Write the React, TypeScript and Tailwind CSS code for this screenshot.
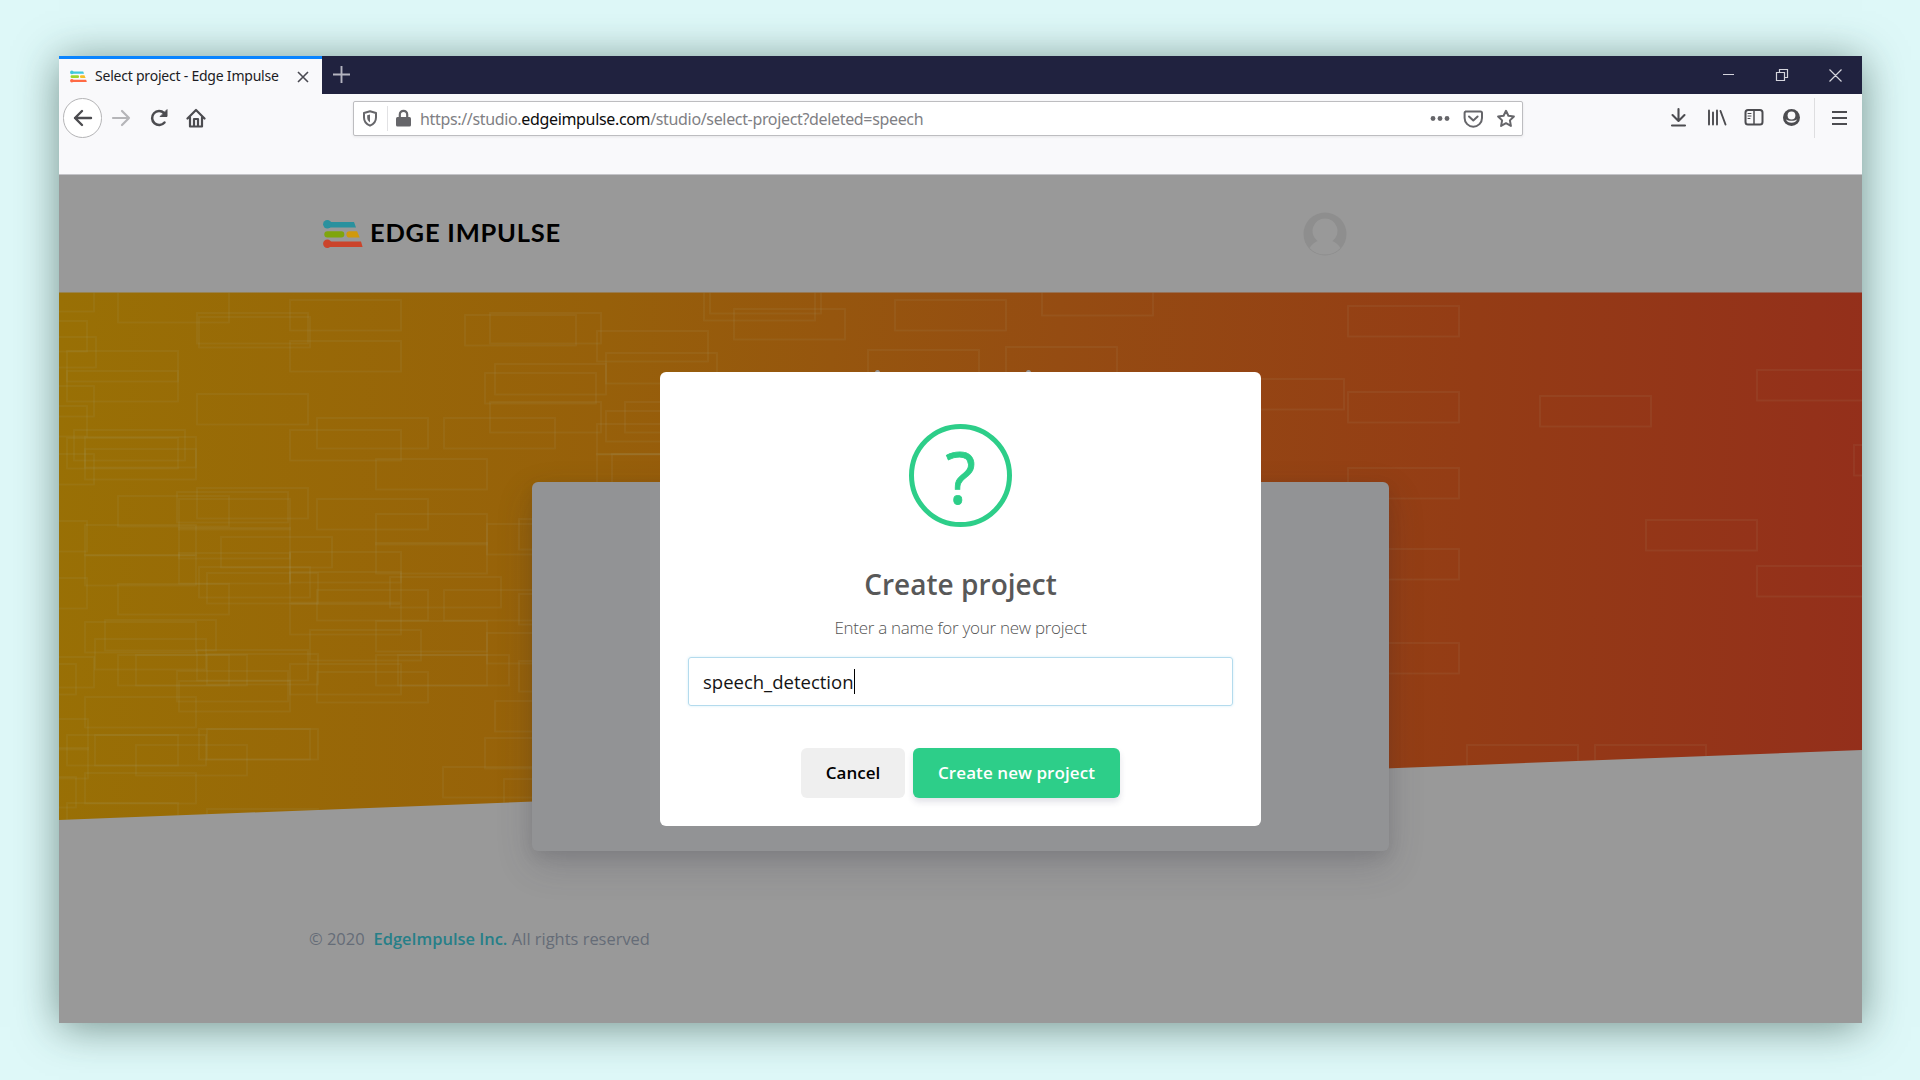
/* Top-left corners of the outlined bricks behind the hero area. */
const bricks: [number, number][] = [
  [-76, -12], [-74, 44], [-83, 28], [-76, 93], [-76, 161], [-83, 113], [-83, 228],
  [59, -1], [138, 20], [140, 24], [138, 101], [231, 7], [231, 48], [406, 22], [431, 20],
  [538, 38], [547, 60], [426, 80], [436, 71], [8, 58], [8, 78], [431, 109], [258, 125],
  [231, 137], [385, 125], [547, 118], [566, 109], [538, 131], [538, 161], [553, 161],
  [15, 137], [8, 145], [26, 144], [26, 156], [317, 166], [138, 195], [118, 199], [120, 206],
  [59, 203], [258, 206], [317, 221], [26, 232], [162, 244], [460, 226], [428, 231],
  [317, 250], [120, 235], [231, 259], [26, 262],
  [-83, 285], [59, 291], [140, 274], [148, 280], [231, 279], [231, 311], [258, 297],
  [331, 284], [385, 297], [317, 328], [251, 337], [26, 329], [46, 327], [36, 346],
  [59, 362], [77, 362], [138, 357], [118, 378], [120, 388], [231, 371], [258, 379],
  [317, 362], [339, 362], [428, 340], [460, 301], [460, 368], [26, 404], [8, 442],
  [36, 442], [77, 452], [140, 436], [148, 436], [-76, 364], [-82, 426], [-82, 455],
  [-94, 371], [-94, 484], [26, 480], [8, 510], [148, 516], [436, 408], [426, 445],
  [384, 474], [445, 486], [120, 260], [148, 361],
  [645, -3], [651, -10], [675, 16], [836, 7], [983, -8], [809, 57], [947, 54],
  [1289, 13], [1174, 86], [1289, 99], [1289, 175], [1289, 256], [1481, 103],
  [1698, 77], [1587, 227], [1698, 273], [1795, 152], [1289, 350], [1408, 452], [1536, 452],
];

const brightLogo = ["#3fc8dc", "#9fd62a", "#f6bf26", "#ff6a45"];
const dimmedLogo = ["#2a919e", "#7fa50c", "#d0990c", "#cb442b"];

function Brand({ className, colors }: { className: string; colors: string[] }) {
  return (
    <svg className={className} viewBox="0 0 40 28" fill="none">
      <path d="M4 2h27l2 5.500H4z" fill={colors[0]} />
      <circle cx="4.300" cy="4.300" r="4.200" fill={colors[0]} />
      <rect x="1.300" y="11.300" width="20" height="6.200" rx="3" fill={colors[1]} />
      <path d="M26.500 11.300h7.500l2.700 6.200H26.500a3 3 0 0 1 0-6.200z" fill={colors[2]} />
      <path d="M4 21.500h34l1.600 5.500H4z" fill={colors[3]} />
      <circle cx="4.300" cy="23.800" r="4.200" fill={colors[3]} />
    </svg>
  );
}

function TitleBar() {
  return (
    <div className="flex h-[38px] shrink-0 bg-[#20223f]">
      <div className="flex w-[263px] items-center border-t-[3px] border-[#0a84ff] bg-[#f9f9fb] pl-[11px]">
        <Brand colors={brightLogo} className="h-[13px] w-[17px]" />
        <span className="ml-[8px] mt-[-2px] whitespace-nowrap font-['Noto_Sans',sans-serif] text-[14px] tracking-[-0.22px] text-[#1c1c24]">Select project - Edge Impulse</span>
        <svg className="ml-auto mr-[13px] h-[12px] w-[12px]" viewBox="0 0 12 12" stroke="#4a4a52" strokeWidth="1.600"><path d="M1 1l10 10M11 1L1 11" /></svg>
      </div>
      <svg className="ml-[11px] mt-[10px] h-[17px] w-[17px]" viewBox="0 0 17 17" stroke="#b4b4c0" strokeWidth="1.900"><path d="M8.500 0v17M0 8.500h17" /></svg>
      <svg className="ml-auto mr-[20px] mt-[12px] h-[14px] w-[119px]" viewBox="0 0 119 14" fill="none" stroke="#d4d4dc" strokeWidth="1.200">
        <path d="M0 6.500h11M56.500 4.500V1.500h8v8h-3M53.500 4.500h8v8h-8zM106.500 1.500l12 12M118.500 1.500l-12 12" />
      </svg>
    </div>
  );
}

function Toolbar() {
  return (
    <div className="flex h-[81px] shrink-0 border-b border-[#c4c4c8] bg-[#f9f9fb] pl-[4px] pt-[4px]">
      <div className="flex h-[40px] w-[39px] items-center justify-center rounded-full border border-[#b4b4b6] bg-white">
        <svg className="h-[18px] w-[20px]" viewBox="0 0 20 18" fill="none" stroke="#4c4c50" strokeWidth="2.400" strokeLinecap="round" strokeLinejoin="round"><path d="M18 9H2M9 2L2 9l7 7" /></svg>
      </div>
      <svg className="ml-[9px] mt-[11px] h-[18px] w-[20px]" viewBox="0 0 20 18" fill="none" stroke="#b5b5b8" strokeWidth="2.200" strokeLinecap="round" strokeLinejoin="round"><path d="M2 9h16M11 2l7 7-7 7" /></svg>
      <svg className="ml-[19px] mt-[11px] h-[18px] w-[19px]" viewBox="0 0 19 18" fill="none" stroke="#4c4c50" strokeWidth="2.500" strokeLinecap="round"><path d="M14.500 13.500A7 7 0 1 1 14 4" /><path d="M17 1v6.500h-6.500z" fill="#4c4c50" strokeWidth="1" /></svg>
      <svg className="ml-[17px] mt-[10px] h-[20px] w-[20px]" viewBox="0 0 20 20" fill="none" stroke="#4c4c50" strokeWidth="2.200" strokeLinecap="round" strokeLinejoin="round"><path d="M1.500 10.500L10 2l8.500 8.500M4 9.500v9h12v-9" /><path d="M8 18v-7h4v7" /></svg>
      <div className="ml-[147px] mt-[3px] flex h-[35px] w-[1170px] items-center rounded-[2px] border border-[#bdbdc0] bg-white pl-[8px] shadow-[0_1px_3px_rgba(0,0,0,0.08)]">
        <svg className="h-[17px] w-[16px]" viewBox="0 0 16 17" fill="none" stroke="#66666a" strokeWidth="2"><path d="M8 1.200l6 1.800v4.500c0 4-2.500 6.700-6 8.200-3.500-1.500-6-4.200-6-8.200V3z" strokeLinejoin="round" /><path d="M8 4.500v8c-2-1.500-2.800-3-2.800-5V5.300z" fill="#66666a" stroke="none" /></svg>
        <div className="ml-[9px] h-[25px] w-px bg-[#e2e2e4]" />
        <svg className="ml-[8px] mt-[-1px] h-[18px] w-[15px]" viewBox="0 0 15 18"><path d="M3.800 9V5.500a3.700 3.700 0 0 1 7.400 0V9" fill="none" stroke="#66666a" strokeWidth="2.200" /><rect y="8" width="15" height="9.500" rx="1.500" fill="#66666a" /></svg>
        <span className="ml-[9px] mt-[1px] whitespace-nowrap font-['Noto_Sans',sans-serif] text-[16px] tracking-[-0.34px] text-[#808084]">https://studio.<span className="text-[#0c0c0d]">edgeimpulse.com</span>/studio/select-project?deleted=speech</span>
        <svg className="ml-auto mr-[6px] h-[20px] w-[86px]" viewBox="0 0 86 20" fill="none" stroke="#66666a" strokeWidth="2">
          <g fill="#66666a" stroke="none"><circle cx="3" cy="9.500" r="2.400" /><circle cx="10" cy="9.500" r="2.400" /><circle cx="17" cy="9.500" r="2.400" /></g>
          <path d="M35 2.500h15.500q1.500 0 1.500 1.500v5a8.700 8.700 0 0 1-17.400 0V4q0-1.500 1.500-1.500z" /><path d="M39 7.500l4.300 4L47.600 7.500" strokeLinecap="round" strokeLinejoin="round" />
          <path d="M76 1.800l2.400 5 5.500.7-4 3.900 1 5.500L76 14.200l-4.900 2.700 1-5.500-4-3.900 5.500-.7z" strokeLinejoin="round" />
        </svg>
      </div>
      <svg className="ml-[147px] mt-[9px] h-[22px] w-[130px]" viewBox="0 0 130 22" fill="none" stroke="#4c4c50" strokeWidth="2" strokeLinecap="round" strokeLinejoin="round">
        <path d="M8.500 2v11M2.500 8l6 6 6-6M2 18.500h13" strokeWidth="2.100" />
        <path d="M39 3.500v14M43 5.500v12M47 3.500v14M50.500 4l5 13.500" strokeWidth="1.900" />
        <rect x="75.500" y="3" width="17" height="14.500" rx="2.500" /><path d="M84 3v14" strokeWidth="1.500" /><path d="M78 6.500h3M78 9h3M78 11.500h2" strokeWidth="1" />
        <circle cx="121.500" cy="10.500" r="8.500" fill="#4c4c50" stroke="none" /><circle cx="121.500" cy="8.500" r="3.900" fill="#f9f9fb" stroke="none" /><path d="M115.800 12.200c1 2.300 3 3.600 5.700 3.600s4.700-1.300 5.700-3.600c-1.500 1-3.300 1.500-5.700 1.500s-4.200-.5-5.700-1.500z" fill="#f9f9fb" stroke="none" />
      </svg>
      <div className="ml-[14px] h-[40px] w-px bg-[#dedee0]" />
      <svg className="ml-[17px] mt-[12px] h-[16px] w-[15px]" viewBox="0 0 15 16" stroke="#4c4c50" strokeWidth="2"><path d="M0 2h15M0 8h15M0 14h15" /></svg>
    </div>
  );
}

function CreateProjectDialog() {
  return (
    <div className="absolute left-[601px] top-[197px] flex h-[454px] w-[601px] flex-col items-center rounded-[6px] bg-white">
      <div className="mt-[52px] flex h-[103px] w-[103px] items-center justify-center rounded-full border-[5px] border-[#2dce89] text-[71px] leading-none text-[#2dce89] [-webkit-text-stroke:0.800px_#2dce89]"><span className="mt-[2px]">?</span></div>
      <h2 className="mt-[37px] text-[28px] font-semibold leading-[40px] tracking-[0.03px] text-[#585858]">Create project</h2>
      <p className="mt-[12px] text-[17px] font-light leading-[24px] tracking-[-0.28px] text-[#545454]">Enter a name for your new project</p>
      <div className="mt-[17px] flex h-[49px] w-[545px] items-center rounded-[3px] border border-[#b4dbed] pl-[14px] text-[18.5px] text-[#141414] shadow-[0_0_3px_#d4edf8]">
        <span>speech_detection</span><span className="h-[25px] w-px bg-black" />
      </div>
      <div className="mt-[42px] flex gap-[8px] text-[17px] font-semibold">
        <div className="flex h-[50px] w-[104px] items-center justify-center rounded-[6px] bg-[#efefef] text-black">Cancel</div>
        <div className="flex h-[50px] w-[207px] items-center justify-center rounded-[6px] bg-[#2dce89] tracking-[0.08px] text-white shadow-[0_4px_6px_rgba(50,50,93,0.14)]">Create new project</div>
      </div>
    </div>
  );
}

export default function App() {
  return (
    <div className="flex h-[1080px] w-[1920px] bg-[#def8f8] pl-[59px] pt-[56px] font-['Open_Sans',sans-serif]">
      <div className="flex h-[967px] w-[1803px] flex-col bg-[#999] shadow-[0_4px_40px_rgba(30,60,50,0.55)]">
        <TitleBar />
        <Toolbar />
        <div className="relative flex min-h-0 flex-1 flex-col">
          <header className="flex h-[117px] shrink-0 items-center pl-[264px]">
            <Brand colors={dimmedLogo} className="h-[28px] w-[40px]" />
            <span className="ml-[7px] mt-[-2px] whitespace-nowrap font-['Lato',sans-serif] text-[25.5px] font-bold leading-none tracking-[0.78px] text-black">EDGE IMPULSE</span>
            <svg className="ml-[742px] h-[44px] w-[44px]" viewBox="0 0 44 44"><circle cx="22" cy="22" r="21.500" fill="#8e8e8e" /><path d="M22 6.500a12.500 12.500 0 0 1 7.500 22.500c3 1.500 6 3.500 8 7a21.500 21.500 0 0 1-31 0c2-3.500 5-5.500 8-7A12.500 12.500 0 0 1 22 6.500z" fill="#999999" /></svg>
          </header>
          <div className="h-[528px] shrink-0 bg-[linear-gradient(92deg,#997005_0%,#97600a_30%,#954c12_55%,#943c15_78%,#942f1b_100%)] [clip-path:polygon(0_0.500px,100%_0.500px,100%_458px,0_528px)]">
            <svg className="h-full w-full" viewBox="0 -1 1803 528" fill="none" stroke="#aaa68c" strokeOpacity="0.095" strokeWidth="1.900">
              {bricks.map(([x, y], i) => <rect key={i} x={x} y={y} width="111" height="30.500" />)}
            </svg>
          </div>
          <div className="relative -mt-[338px] ml-[473px] h-[369px] w-[857px] shrink-0 rounded-[6px] bg-[#929395] shadow-[0_14px_36px_rgba(50,50,70,0.2),0_5px_15px_rgba(0,0,0,0.08)]" />
          <footer className="ml-[250px] mt-[75px] flex whitespace-nowrap text-[16.45px] leading-[26px] text-[#656c77]">
            <span>© 2020</span>
            <span className="ml-[9px] font-semibold text-[#267f88]">EdgeImpulse Inc.</span>
            <span className="ml-[4.5px]">All rights reserved</span>
          </footer>
          <div className="absolute left-[816px] top-[195px] h-[5px] w-[5px] rounded-full bg-[#999]" />
          <div className="absolute left-[967px] top-[195px] h-[5px] w-[5px] rounded-full bg-[#999]" />
          <CreateProjectDialog />
        </div>
      </div>
    </div>
  );
}
